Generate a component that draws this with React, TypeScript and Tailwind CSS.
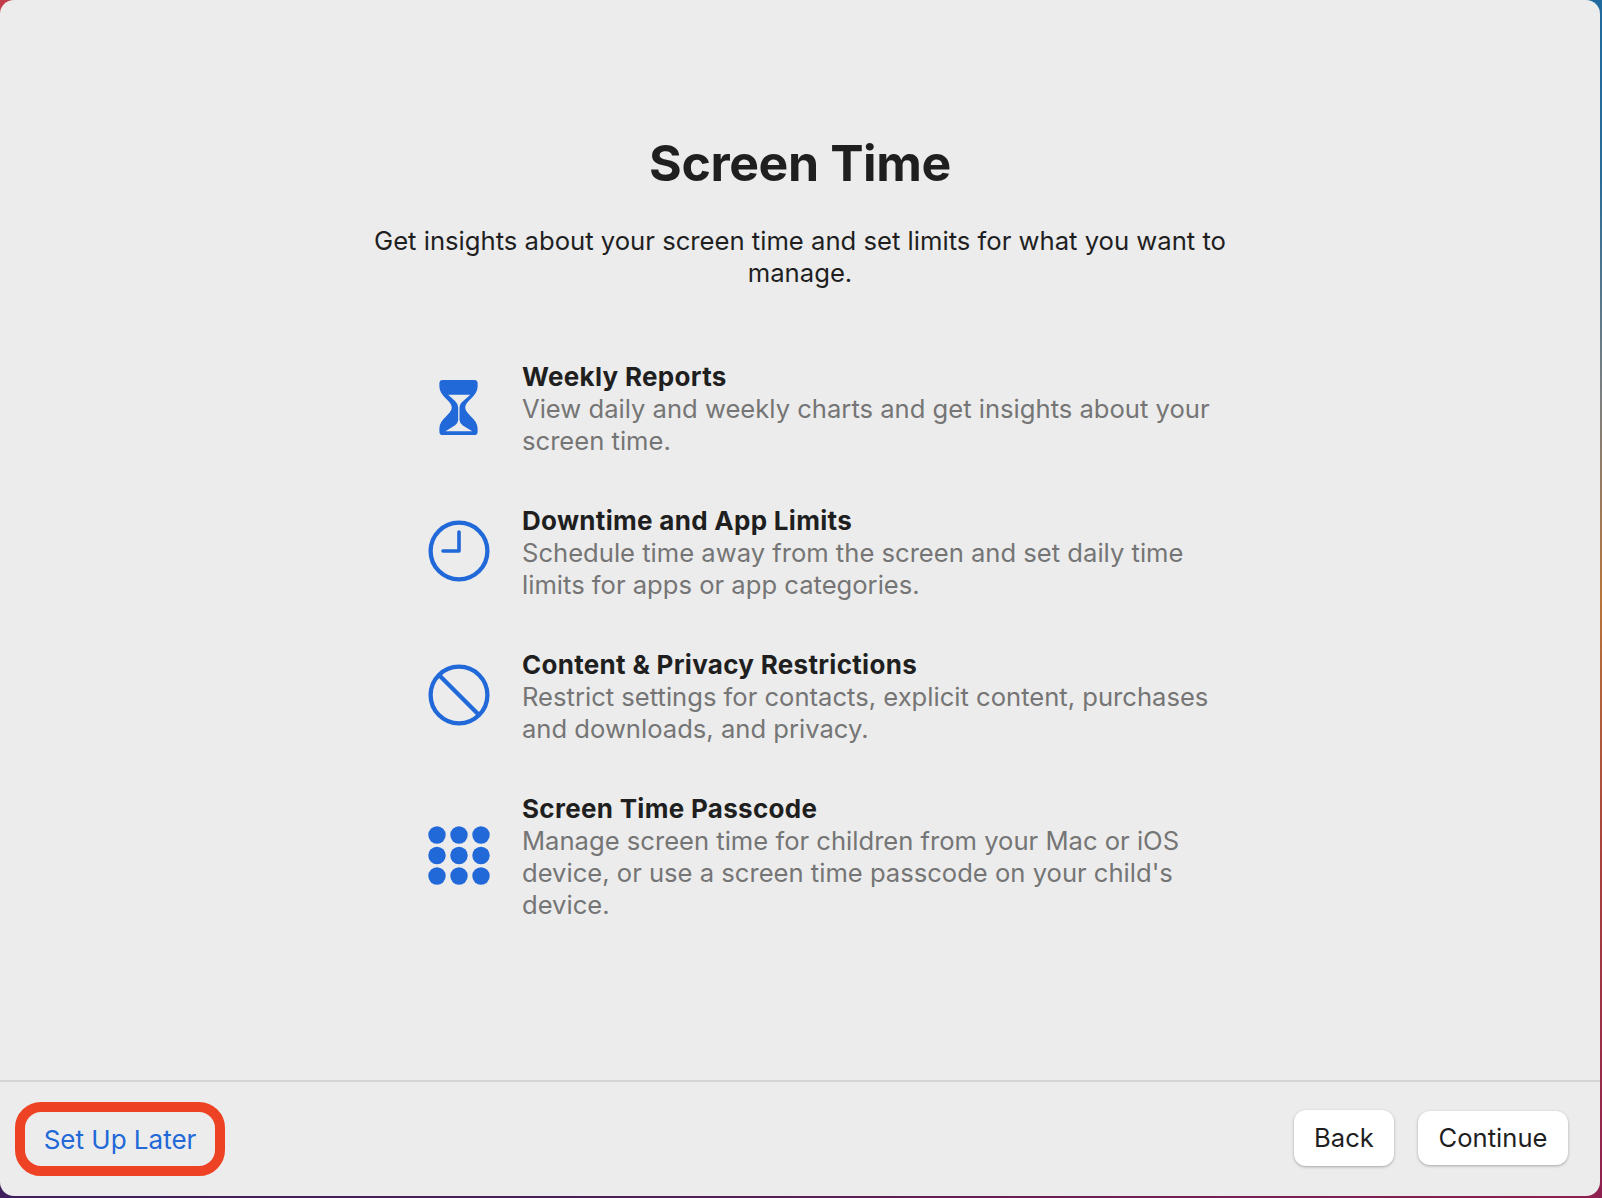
const ink = "text-[#1f1f1f]";

function Hourglass() {
  return (
    <svg width="39" height="55" viewBox="0 0 114 164" fill="none" className="mr-[2px]">
      <path
        fillRule="evenodd"
        fill="#2168d8"
        d="M10 0H104Q114 0 114 10V20C114 48 77 62 77 82C77 102 114 116 114 144V154Q114 164 104 164H10Q0 164 0 154V144C0 116 37 102 37 82C37 62 0 48 0 20V10Q0 0 10 0ZM26 44H92L72 62Q61 70 60 82V120Q61 130 70 136L98 153H18L46 136Q55 130 56 120V82Q55 70 46 62Z"
      />
    </svg>
  );
}

function Clock() {
  return (
    <svg width="62" height="62" viewBox="0 0 62 62" fill="none" stroke="#2168d8" strokeLinecap="round" strokeLinejoin="round">
      <circle cx="31" cy="31" r="28.4" strokeWidth="4.3" />
      <path d="M31 12V31H15" strokeWidth="3.6" />
    </svg>
  );
}

function Prohibit() {
  return (
    <svg width="62" height="62" viewBox="0 0 62 62" fill="none" stroke="#2168d8">
      <circle cx="31" cy="31" r="28.4" strokeWidth="4.3" />
      <path d="M11 11L51 51" strokeWidth="4.3" />
    </svg>
  );
}

function Keypad() {
  const cols = [9, 31, 53];
  const rows = [9, 29.5, 50];
  return (
    <svg width="62" height="59" viewBox="0 0 62 59" fill="#2168d8">
      {rows.map((y) => cols.map((x) => <circle key={`${x}-${y}`} cx={x} cy={y} r="8.7" />))}
    </svg>
  );
}

const features = [
  { icon: <Hourglass />, title: "Weekly Reports", lines: ["View daily and weekly charts and get insights about your", "screen time."] },
  { icon: <Clock />, title: "Downtime and App Limits", lines: ["Schedule time away from the screen and set daily time", "limits for apps or app categories."] },
  { icon: <Prohibit />, title: "Content & Privacy Restrictions", lines: ["Restrict settings for contacts, explicit content, purchases", "and downloads, and privacy."] },
  { icon: <Keypad />, title: "Screen Time Passcode", lines: ["Manage screen time for children from your Mac or iOS", "device, or use a screen time passcode on your child's", "device."] },
];

export default function App() {
  return (
    <div className="w-[1602px] h-[1198px] overflow-hidden font-['Inter','Noto_Sans',sans-serif] [background:linear-gradient(#c23b4a,#c23b4a)_left_top/20px_24px_no-repeat,linear-gradient(180deg,#1f6a9e_0%,#2a6c98_15%,#7c8080_33%,#b8743a_50%,#a8403c_72%,#8e2050_100%)_right_top/20px_100%_no-repeat,linear-gradient(90deg,#3f1f5e_0%,#4a1f58_35%,#8e2050_100%)]">
      <div className="w-[1600px] h-[1196px] rounded-[14px] bg-[#ececec] flex flex-col">
        <main className="flex-1 flex flex-col items-center pt-[129px]">
          <h1 className={`text-[50px] leading-[68px] font-bold tracking-[-0.4px] ${ink}`}>Screen Time</h1>
          <p className={`mt-[28px] w-[900px] text-center text-[25.65px] leading-[32px] ${ink}`}>
            Get insights about your screen time and set limits for what you want to manage.
          </p>
          <div className="mt-[72px] w-[790px] flex flex-col gap-[48px] ml-[46px]">
            {features.map((f) => (
              <div key={f.title} className="flex">
                <div className="w-[94px] shrink-0 flex justify-center items-center pr-[32px] pb-[4px]">{f.icon}</div>
                <div>
                  <div className={`text-[26px] leading-[32px] font-bold tracking-[0.3px] ${ink}`}>{f.title}</div>
                  {f.lines.map((l) => (
                    <div key={l} className="text-[25.6px] leading-[32px] text-[#757575] whitespace-nowrap">{l}</div>
                  ))}
                </div>
              </div>
            ))}
          </div>
        </main>
        <footer className="h-[116px] border-t-2 border-[#d5d5d5] flex items-center justify-between pl-[15px] pr-[32px]">
          <div className="w-[210px] h-[74px] rounded-[26px] border-[10px] border-[#ee4224] flex items-center justify-center text-[26px] text-[#2168d8]">
            Set Up Later
          </div>
          <div className="flex items-center gap-[24px] mt-[-2px]">
            <button className={`w-[100px] h-[56px] rounded-[12px] bg-white shadow-[0_1px_3px_rgba(0,0,0,0.3)] text-[25.6px] ${ink}`}>Back</button>
            <button className={`w-[150px] h-[54px] rounded-[12px] bg-white shadow-[0_1px_3px_rgba(0,0,0,0.3)] text-[25.6px] ${ink}`}>Continue</button>
          </div>
        </footer>
      </div>
    </div>
  );
}
